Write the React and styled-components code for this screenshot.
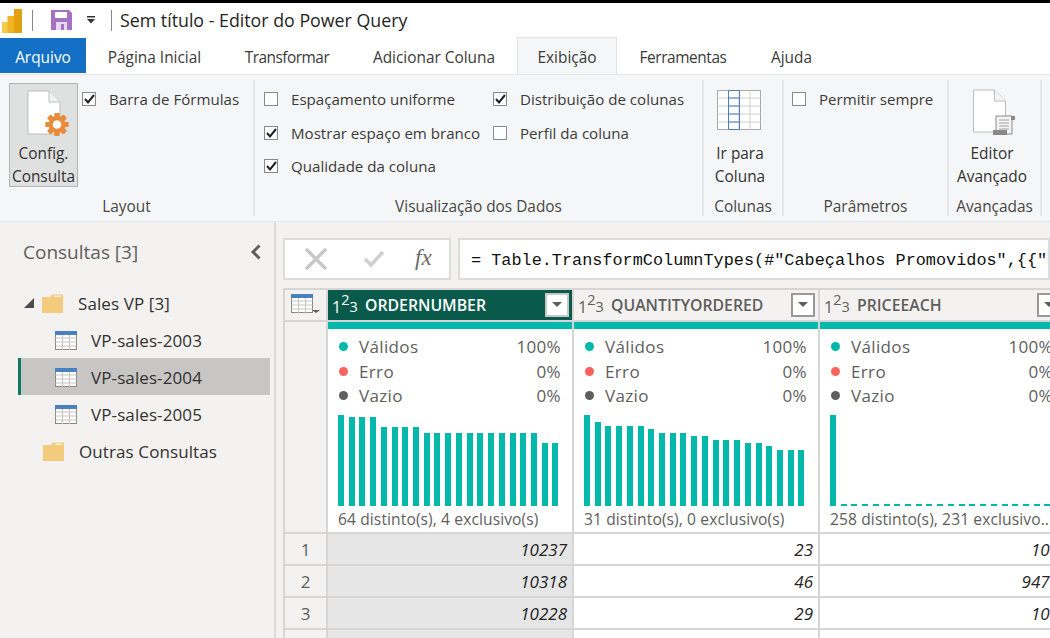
import React from "react";
import styled, { createGlobalStyle } from "styled-components";

const Global = createGlobalStyle`
  html, body { margin: 0; height: 638px; overflow: hidden; background: #f3f2f1; }
  * { box-sizing: border-box; }
  #root { font-family: "Open Sans", "Noto Sans", sans-serif; font-size: 15.4px; color: #3b3a39; }
`;

const Page = styled.div`width: 1050px; height: 638px; display: flex; flex-direction: column; overflow: hidden; border-top: 3px solid #000; background: #f3f2f1;`;
const TitleBar = styled.div`height: 34px; background: #fff; display: flex; align-items: center; flex: none; padding-left: 2px;`;
const TitleSep = styled.div`width: 1px; height: 21px; background: #8a8886; margin: 0 ${p => p.$r}px 0 ${p => p.$l}px;`;
const TitleText = styled.div`font-size: 17.8px; color: #252423; white-space: nowrap;`;
const QuickArrow = styled.svg`margin: 0 15px 0 14px;`;

const Tabs = styled.div`height: 37px; background: #fff; display: flex; flex: none; align-items: stretch; position: relative;`;
const Tab = styled.div`
  width: ${p => p.$w}px; display: flex; align-items: center; justify-content: center; white-space: nowrap; padding-top: 3px; color: #3b3a39;
  letter-spacing: ${p => p.$ls || 0}px;
  ${p => p.$file && "background:#1470c4;color:#fff;margin-top:1px;margin-bottom:1px;"}
  ${p => p.$active && "background:#f5f6f7;border:1px solid #e1e1e1;border-bottom:none;"}
`;

const Ribbon = styled.div`height: 148px; flex: none; background: #f5f6f7; display: flex; padding-top: 5px; padding-bottom: 5px; border-top: 1px solid #e6e6e6; border-bottom: 1px solid #e6e6e6;`;
const Group = styled.div`width: ${p => p.$w}px; flex: none; border-right: 2px solid #e4e5e6; display: flex; flex-direction: column; position: relative;`;
const GroupBody = styled.div`flex: 1; display: flex; min-height: 0;`;
const GroupLabel = styled.div`height: 32px; flex: none; text-align: center; color: #484644; font-size: 15.4px; padding-top: 12px; white-space: nowrap;`;
const BigBtn = styled.div`
  width: ${p => p.$w || 69}px; height: 104px; margin: ${p => p.$m || "3px 0 0 9px"}; flex: none; display: flex; flex-direction: column; align-items: center;
  ${p => p.$on && "background:#dfe0e0;border:1px solid #b4b4b4;"}
  color: #323130; line-height: 23px; text-align: center; white-space: nowrap;
`;
const IconSlot = styled.div`height: ${p => p.$h || 59}px; flex: none; display: flex; align-items: flex-start; justify-content: center; padding-top: ${p => p.$t || 6}px;`;
const CheckCols = styled.div`display: flex; padding: ${p => p.$p}; gap: ${p => p.$g || 0}px;`;
const CheckCol = styled.div`display: flex; flex-direction: column; width: ${p => p.$w}px;`;
const CheckRow = styled.div`display: flex; align-items: center; height: 33.7px; gap: 13px; white-space: nowrap; color: #3b3a39; font-size: 15.1px;`;
const Box = styled.span`width: 14px; height: 14px; flex: none; border: 1px solid #8a8886; background: #fff; display: flex; align-items: center; justify-content: center;`;

const Body = styled.div`flex: 1; display: flex; min-height: 0;`;
const Side = styled.div`width: 276px; flex: none; border-right: 2px solid #dcdbda; padding-top: 17px; background: #f3f2f1;`;
const SideHead = styled.div`display: flex; justify-content: space-between; align-items: center; padding: 0 12px 0 23px; height: 26px; font-size: 19px; color: #605e5c;`;
const Tree = styled.div`margin: 19px 4px 0 18px; display: flex; flex-direction: column;`;
const TreeRow = styled.div`
  height: 37px; display: flex; align-items: center; padding-left: ${p => p.$indent}px; padding-top: 1px; font-size: 17px; letter-spacing: .1px; color: #323130; white-space: nowrap;
  border-left: 3px solid ${p => (p.$sel ? "#117865" : "transparent")};
  ${p => p.$sel && "background:#c8c6c4;"}
`;
const Tri = styled.span`width: 0; height: 0; border-style: solid; border-width: 0 0 10px 10px; border-color: transparent transparent #4c4c4c transparent; margin-right: 8px;`;

const Main = styled.div`flex: 1; min-width: 0; padding: 16px 0 0 7px; overflow: hidden;`;
const FormulaRow = styled.div`display: flex; gap: 7px; height: 42px;`;
const FormulaBtns = styled.div`width: 168px; background: #fff; border: 2px solid #dcdcdc; display: flex; align-items: center; padding-left: 19px;`;
const Fx = styled.span`font-family: "Liberation Serif", serif; font-style: italic; font-size: 23px; color: #6b6a69; margin-left: 30px; padding-bottom: 2px;`;
const FormulaText = styled.div`
  flex: 1; min-width: 0; background: #fff; border: 2px solid #dcdcdc; display: flex; align-items: center; padding: 2px 0 0 11px; overflow: hidden; white-space: nowrap;
  font-family: "Liberation Mono", monospace; font-size: 16.85px; color: #111;
`;
const Table = styled.div`
  margin-top: 8px; display: grid; width: 781px; grid-template-columns: 43px 246px 246px 246px; grid-template-rows: 32px 212px 32px 32px 32px 40px;
  border-top: 2px solid #d6d6d6; border-left: 2px solid #d6d6d6;
`;
const Corner = styled.div`background: #f3f2f1; border-right: 2px solid #d6d6d6; border-bottom: 2px solid #d6d6d6; padding: 4px 0 0 6px; display: flex; align-items: flex-start;`;
const RowGutter = styled.div`background: #f3f2f1; border-right: 2px solid #d6d6d6; border-bottom: 2px solid #d6d6d6; display: flex; align-items: center; justify-content: center; font-size: 17px; color: #605e5c;`;
const ColHead = styled.div`
  display: flex; align-items: center; padding: 0 3px 0 4px; border-right: 2px solid #d6d6d6; border-bottom: 2px solid #d6d6d6;
  background: ${p => (p.$on ? "#0a5a4c" : "#f3f2f1")}; color: ${p => (p.$on ? "#fff" : "#605e5c")};
`;
const ColName = styled.div`flex: 1; font-weight: 600; font-size: 15.8px; white-space: nowrap; margin-left: 9px;`;
const TypeIcon = styled.span`display: inline-flex; align-items: flex-start; width: 24px; line-height: 1; height: 20px; flex: none;`;
const Digit = styled.span`position: relative; top: ${p => p.$y}px; font-size: ${p => p.$s}px;`;
const FilterBtn = styled.div`width: 24px; height: 24px; background: #fff; border: 2px solid ${p => (p.$on ? "#c8c8c8" : "#9a9a9a")}; display: flex; align-items: center; justify-content: center; flex: none; margin-bottom: 1px;`;
const Caret = styled.span`width: 0; height: 0; border-left: 5px solid transparent; border-right: 5px solid transparent; border-top: 5px solid #605e5c;`;
const Profile = styled.div`background: #fff; border-right: 2px solid #d6d6d6; border-bottom: 2px solid #d6d6d6; display: flex; flex-direction: column; overflow: hidden;`;
const Quality = styled.div`height: 7px; background: #01b8aa; flex: none;`;
const Stats = styled.div`padding: 5px 11px 0 8px; height: 85px; flex: none;`;
const Stat = styled.div`height: 24.7px; display: flex; align-items: center; font-size: 17px; letter-spacing: .35px; color: #605e5c;`;
const Dot = styled.span`width: 9px; height: 9px; border-radius: 50%; background: ${p => p.$c}; margin: 0 11px 0 3px; flex: none;`;
const StatLabel = styled.span`flex: 1;`;
const Chart = styled.div`height: 92px; padding: 0 0 0 10px; display: flex; align-items: flex-end; gap: 4.72px; flex: none; overflow: hidden;`;
const Bar = styled.div`width: 6px; flex: none; background: #01b8aa;`;
const Distinct = styled.div`font-size: 15.6px; letter-spacing: .1px; color: #605e5c; padding: 2px 0 0 10px; white-space: nowrap;`;
const Cell = styled.div`
  border-right: 2px solid #d6d6d6; border-bottom: 2px solid #d6d6d6; display: flex; align-items: center; justify-content: flex-end; padding: 0 5px 0 0;
  font-style: italic; font-size: 17px; color: #252423; background: ${p => (p.$sel ? "#e6e6e6" : "#fff")};
`;

const Check = () => (
  <svg width="11" height="10" viewBox="0 0 11 10"><path d="M1 5l3 3.4L10 1" fill="none" stroke="#1f1f1f" strokeWidth="2" /></svg>
);
const CB = ({ on, label }) => (
  <CheckRow><Box>{on && <Check />}</Box>{label}</CheckRow>
);
const Folder = () => (
  <svg width="21" height="19" viewBox="0 0 21 19" style={{ marginRight: 15, flex: "none" }}>
    <path d="M0 3h8l2-2.500h11V19H0z" fill="#f2cb7c" /><path d="M12 1.500h7V3h-7z" fill="#fff" opacity=".7" />
  </svg>
);
const TableIcon = ({ style }) => (
  <svg width="22" height="19" viewBox="0 0 22 19" style={style}>
    <rect x=".5" y=".5" width="21" height="18" fill="#fff" stroke="#8a8886" />
    <path d="M.5 7h21M.5 11h21M.5 15h21M7.500 4v15M14.500 4v15" stroke="#c4c4c4" fill="none" />
    <rect width="22" height="4" fill="#4a80c0" />
  </svg>
);
const DocGear = () => (
  <svg width="48" height="50" viewBox="0 0 48 50" style={{ marginLeft: 10 }}>
    <path d="M3 1h21l11 11v32H3z" fill="#fff" stroke="#bdbdbd" />
    <path d="M24 1v11h11" fill="#f3f3f3" stroke="#bdbdbd" />
    <g fill="#e98b3a">
      {[0, 45, 90, 135, 180, 225, 270, 315].map(a => (
        <rect key={a} x="29.500" y="23" width="5" height="23" rx="1" transform={`rotate(${a} 32 34.500)`} />
      ))}
      <circle cx="32" cy="34.500" r="8.500" />
    </g>
    <circle cx="32" cy="34.500" r="4.300" fill="#fff" />
  </svg>
);
const GridIcon = () => (
  <svg width="44" height="41" viewBox="0 0 44 41" style={{ marginRight: 3 }}>
    <rect x=".5" y=".5" width="43" height="39" fill="#fff" stroke="#a8a8a8" />
    <path d="M.5 8h43M.5 16h43M.5 24h43M.5 32h43M22 .5v39M33 .5v39" stroke="#d0d0d0" fill="none" />
    <path d="M11.500 .5h11v39h-11zM11.500 8h11M11.500 16h11M11.500 24h11M11.500 32h11" stroke="#4a80c0" fill="none" />
  </svg>
);
const DocScroll = () => (
  <svg width="42" height="48" viewBox="0 0 42 48" style={{ marginLeft: 4 }}>
    <path d="M.5 1h21l11 11v31H.5z" fill="#fff" stroke="#bdbdbd" />
    <path d="M21.500 1v11h11" fill="#f3f3f3" stroke="#bdbdbd" />
    <path d="M23 27h16v18H23z" fill="#f5f5f5" stroke="#8a8886" />
    <path d="M26 31h10M26 34h10M26 37h10M26 40h10" stroke="#a0a0a0" />
    <rect x="20" y="41" width="14" height="5" fill="#8a8886" />
    <rect x="38" y="27" width="4" height="4" fill="#8a8886" />
  </svg>
);
const Logo = () => (
  <svg width="20" height="24" viewBox="0 0 20 24" style={{ flex: "none", marginTop: 1 }}>
    <rect x="0" y="13" width="8" height="11" fill="#f6c94f" />
    <rect x="5.500" y="7" width="8" height="17" fill="#f0b323" />
    <rect x="12" y="0" width="8" height="24" fill="#e2a10f" />
  </svg>
);
const Save = () => (
  <svg width="21" height="20" viewBox="0 0 21 20" style={{ flex: "none" }}>
    <path d="M0 0h18l3 3v17H0z" fill="#a471c5" />
    <rect x="4" y="2" width="12" height="6" fill="#fff" />
    <rect x="5" y="12" width="11" height="8" fill="#e6daf0" />
    <rect x="10" y="14" width="3" height="6" fill="#a471c5" />
  </svg>
);

const BARS1 = [91, 89, 89, 89, 79, 79, 79, 79, 73, 73, 73, 73, 73, 73, 73, 73, 73, 73, 73, 63, 63];
const BARS2 = [91, 84, 80, 80, 80, 80, 77, 73, 73, 73, 70, 70, 66, 66, 66, 63, 63, 60, 56, 56, 56];
const BARS3 = [91, ...Array(22).fill(2)];

const Type123 = () => (
  <TypeIcon><Digit $s={16} $y={4}>1</Digit><Digit $s={14.5} $y={-2}>2</Digit><Digit $s={14.5} $y={5}>3</Digit></TypeIcon>
);
const ProfileCol = ({ bars, text }) => (
  <Profile>
    <Quality />
    <Stats>
      <Stat><Dot $c="#01b8aa" /><StatLabel>Válidos</StatLabel>100%</Stat>
      <Stat><Dot $c="#fd625e" /><StatLabel>Erro</StatLabel>0%</Stat>
      <Stat><Dot $c="#605e5c" /><StatLabel>Vazio</StatLabel>0%</Stat>
    </Stats>
    <Chart>{bars.map((h, i) => <Bar key={i} style={{ height: h }} />)}</Chart>
    <Distinct>{text}</Distinct>
  </Profile>
);

const rows = [["1", "10237", "23", "100"], ["2", "10318", "46", "9474"], ["3", "10228", "29", "100"]];

export default function App() {
  return (
    <Page>
      <Global />
      <TitleBar>
        <Logo />
        <TitleSep $l={10} $r={18} />
        <Save />
        <QuickArrow width="10" height="8" viewBox="0 0 10 8"><path d="M1 0h8v1.500H1zM1 3h8L5 7.500z" fill="#333" /></QuickArrow>
        <TitleSep $l={0} $r={8} />
        <TitleText>Sem título - Editor do Power Query</TitleText>
      </TitleBar>
      <Tabs>
        <Tab $file $w={86}>Arquivo</Tab>
        <Tab $w={137}>Página Inicial</Tab>
        <Tab $w={128} $ls={-0.5}>Transformar</Tab>
        <Tab $w={166}>Adicionar Coluna</Tab>
        <Tab $active $w={100}>Exibição</Tab>
        <Tab $w={132} $ls={-0.4}>Ferramentas</Tab>
        <Tab $w={85}>Ajuda</Tab>
      </Tabs>
      <Ribbon>
        <Group $w={255}>
          <GroupBody>
            <BigBtn $on>
              <IconSlot $h={58}><DocGear /></IconSlot>
              <div>Config.<br />Consulta</div>
            </BigBtn>
            <CheckCols $p="2px 0 0 4px"><CheckCol $w={170}><CB on label="Barra de Fórmulas" /></CheckCol></CheckCols>
          </GroupBody>
          <GroupLabel>Layout</GroupLabel>
        </Group>
        <Group $w={449}>
          <GroupBody>
            <CheckCols $p="2px 0 0 9px">
              <CheckCol $w={229}>
                <CB label="Espaçamento uniforme" />
                <CB on label="Mostrar espaço em branco" />
                <CB on label="Qualidade da coluna" />
              </CheckCol>
              <CheckCol $w={200}>
                <CB on label="Distribuição de colunas" />
                <CB label="Perfil da coluna" />
              </CheckCol>
            </CheckCols>
          </GroupBody>
          <GroupLabel>Visualização dos Dados</GroupLabel>
        </Group>
        <Group $w={80}>
          <GroupBody>
            <BigBtn $w={72} $m="3px 0 0 0">
              <IconSlot $h={59} $t={7}><GridIcon /></IconSlot>
              <div>Ir para<br />Coluna</div>
            </BigBtn>
          </GroupBody>
          <GroupLabel>Colunas</GroupLabel>
        </Group>
        <Group $w={165}>
          <GroupBody>
            <CheckCols $p="2px 0 0 8px"><CheckCol $w={150}><CB label="Permitir sempre" /></CheckCol></CheckCols>
          </GroupBody>
          <GroupLabel>Parâmetros</GroupLabel>
        </Group>
        <Group $w={93}>
          <GroupBody>
            <BigBtn $w={86} $m="3px 0 0 0">
              <IconSlot $h={59}><DocScroll /></IconSlot>
              <div>Editor<br />Avançado</div>
            </BigBtn>
          </GroupBody>
          <GroupLabel>Avançadas</GroupLabel>
        </Group>
      </Ribbon>
      <Body>
        <Side>
          <SideHead>
            Consultas [3]
            <svg width="12" height="16" viewBox="0 0 12 16"><path d="M9.500 1.500L3 8l6.500 6.500" fill="none" stroke="#605e5c" strokeWidth="3" /></svg>
          </SideHead>
          <Tree>
            <TreeRow $indent={3}><Tri /><Folder />Sales VP [3]</TreeRow>
            <TreeRow $indent={34}><TableIcon style={{ marginRight: 14 }} />VP-sales-2003</TreeRow>
            <TreeRow $sel $indent={34}><TableIcon style={{ marginRight: 14 }} />VP-sales-2004</TreeRow>
            <TreeRow $indent={34}><TableIcon style={{ marginRight: 14 }} />VP-sales-2005</TreeRow>
            <TreeRow $indent={22}><Folder />Outras Consultas</TreeRow>
          </Tree>
        </Side>
        <Main>
          <FormulaRow>
            <FormulaBtns>
              <svg width="24" height="24" viewBox="0 0 24 24"><path d="M2 2l20 20M22 2L2 22" stroke="#c8c8c8" strokeWidth="3.500" /></svg>
              <svg width="22" height="18" viewBox="0 0 22 18" style={{ marginLeft: 35 }}><path d="M2 9l6 6L20 2" fill="none" stroke="#d0d0d0" strokeWidth="3.500" /></svg>
              <Fx>fx</Fx>
            </FormulaBtns>
            <FormulaText>= Table.TransformColumnTypes(#"Cabeçalhos Promovidos",{'{{'}"O</FormulaText>
          </FormulaRow>
          <Table>
            <Corner>
              <TableIcon />
              <svg width="8" height="20" viewBox="0 0 8 20" style={{ marginLeft: -1 }}><path d="M0 16h8l-4 3z" fill="#605e5c" /></svg>
            </Corner>
            <ColHead $on><Type123 /><ColName>ORDERNUMBER</ColName><FilterBtn $on><Caret /></FilterBtn></ColHead>
            <ColHead><Type123 /><ColName>QUANTITYORDERED</ColName><FilterBtn><Caret /></FilterBtn></ColHead>
            <ColHead><Type123 /><ColName>PRICEEACH</ColName><FilterBtn><Caret /></FilterBtn></ColHead>
            <RowGutter />
            <ProfileCol bars={BARS1} text="64 distinto(s), 4 exclusivo(s)" />
            <ProfileCol bars={BARS2} text="31 distinto(s), 0 exclusivo(s)" />
            <ProfileCol bars={BARS3} text="258 distinto(s), 231 exclusivo..." />
            {rows.map(r => (
              <React.Fragment key={r[0]}>
                <RowGutter>{r[0]}</RowGutter>
                <Cell $sel>{r[1]}</Cell>
                <Cell>{r[2]}</Cell>
                <Cell>{r[3]}</Cell>
              </React.Fragment>
            ))}
            <RowGutter />
            <Cell $sel />
            <Cell />
            <Cell />
          </Table>
        </Main>
      </Body>
    </Page>
  );
}
